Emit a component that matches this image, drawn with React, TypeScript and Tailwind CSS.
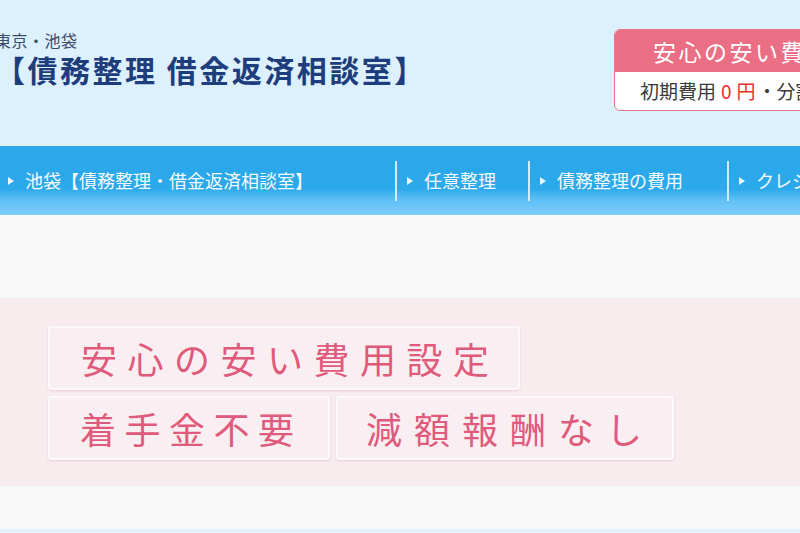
const jp = "font-['Noto_Sans_CJK_JP','Noto_Sans',sans-serif]";

const navItems = [
  { label: "池袋【債務整理・借金返済相談室】", width: "w-[395px]", pad: "pl-[8px]" },
  { label: "任意整理", width: "w-[133px]", pad: "pl-[10px]" },
  { label: "債務整理の費用", width: "w-[199px]", pad: "pl-[10px]" },
  { label: "クレジットカード", width: "w-[200px]", pad: "pl-[10px]" },
];

function Arrow() {
  return (
    <svg width="6" height="8" viewBox="0 0 6 8" className="shrink-0">
      <path d="M0 0 L6 4 L0 8 Z" fill="#eaf6ff" />
    </svg>
  );
}

function Header() {
  return (
    <header className="flex h-[146px] bg-[#dcf0fd]">
      <div className="ml-[-5px] shrink-0 pt-[30px]">
        <p className="text-[16px] leading-[20px] tracking-[0.5px] text-[#3c4a66]">東京・池袋</p>
        <h1 className="mt-[2px] whitespace-nowrap text-[30px] font-bold leading-[34px] tracking-[2.5px] text-[#1e3d7c]">
          【債務整理 借金返済相談室】
        </h1>
      </div>
      <div className="ml-auto mr-[-60px] mt-[29px] h-[82px] w-[246px] shrink-0 overflow-hidden rounded-[6px] border border-[#e8798c] bg-white">
        <div className="flex h-[42px] items-center whitespace-nowrap bg-[#ea6e84] pl-[38px] text-[23px] tracking-[2.5px] text-white">
          安心の安い費用設定
        </div>
        <div className="flex h-[38px] items-center whitespace-nowrap pl-[25px] text-[19px] text-[#3a3a3a]">
          初期費用<span className="mx-[5px] text-[#ec2c2c]">0</span>
          <span className="mr-[2px] text-[#ec2c2c]">円</span>・分割払いOK
        </div>
      </div>
    </header>
  );
}

function Nav() {
  return (
    <nav className="flex h-[69px] bg-[linear-gradient(to_bottom,#2ba7ea_0%,#2ba9eb_62%,#5fbff5_78%,#7fcffc_100%)]">
      {navItems.map((item, i) => (
        <div key={item.label} className={`flex shrink-0 items-center ${item.width}`}>
          {i > 0 ? <div className="h-[40px] w-[2px] bg-[#d4ecfa]" /> : null}
          <div className={`flex items-center gap-[11px] ${item.pad} text-[18px] text-[#f4faff]`}>
            <Arrow />
            <span className="whitespace-nowrap">{item.label}</span>
          </div>
        </div>
      ))}
    </nav>
  );
}

function Tag({ children, className }: { children: string; className: string }) {
  return (
    <div
      className={`flex h-[64px] items-center whitespace-nowrap rounded-[3px] border-2 border-[#fdf9fa] bg-[#f9eef1] text-[36px] leading-none text-[#e05a7b] shadow-[0_1px_2px_rgba(200,150,160,0.35)] ${className}`}
    >
      {children}
    </div>
  );
}

export default function App() {
  return (
    <div className={`h-[533px] w-[800px] overflow-hidden bg-[#f8f8f8] ${jp}`}>
      <Header />
      <Nav />
      <div className="h-[83px]" />
      <section className="bg-[#f8ecef] pb-[26px] pl-[48px] pt-[28px]">
        <div className="flex flex-col gap-[6px]">
          <Tag className="w-[472px] pl-[31px] tracking-[10.5px]">安心の安い費用設定</Tag>
          <div className="flex gap-[6px]">
            <Tag className="w-[282px] pl-[30px] tracking-[8.5px]">着手金不要</Tag>
            <Tag className="w-[338px] pl-[28px] tracking-[12px]">減額報酬なし</Tag>
          </div>
        </div>
      </section>
      <div className="h-[43px]" />
      <div className="h-[10px] bg-[#e2f1fb]" />
    </div>
  );
}
